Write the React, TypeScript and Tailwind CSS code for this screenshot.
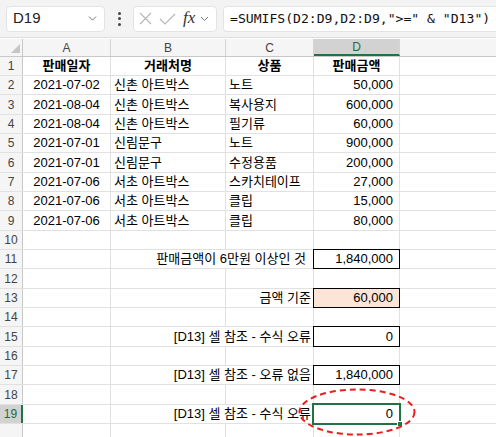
import { ChevronDown } from 'lucide-react'

type Row = {
  a?: string
  b?: string
  c?: string
  d?: string
  label?: string
  span?: boolean
  box?: boolean
  fill?: boolean
  selected?: boolean
  bold?: boolean
  labelPad?: string
}

const rows: Row[] = [
  { a: '판매일자', b: '거래처명', c: '상품', d: '판매금액', bold: true },
  { a: '2021-07-02', b: '신촌 아트박스', c: '노트', d: '50,000' },
  { a: '2021-08-04', b: '신촌 아트박스', c: '복사용지', d: '600,000' },
  { a: '2021-08-04', b: '신촌 아트박스', c: '필기류', d: '60,000' },
  { a: '2021-07-01', b: '신림문구', c: '노트', d: '900,000' },
  { a: '2021-07-01', b: '신림문구', c: '수정용품', d: '200,000' },
  { a: '2021-07-06', b: '서초 아트박스', c: '스카치테이프', d: '27,000' },
  { a: '2021-07-06', b: '서초 아트박스', c: '클립', d: '15,000' },
  { a: '2021-07-06', b: '서초 아트박스', c: '클립', d: '80,000' },
  {},
  { label: '판매금액이 6만원 이상인 것', span: true, d: '1,840,000', box: true, labelPad: 'pr-[7px]' },
  {},
  { label: '금액 기준', d: '60,000', box: true, fill: true },
  {},
  { label: '[D13] 셀 참조 - 수식 오류', span: true, d: '0', box: true },
  {},
  { label: '[D13] 셀 참조 - 오류 없음', span: true, d: '1,840,000', box: true },
  {},
  { label: '[D13] 셀 참조 - 수식 오류', span: true, d: '0', selected: true },
]

const heights = [19, 19, 20, 19, 19, 20, 19, 19, 20, 19, 19, 20, 19, 19, 20, 19, 19, 20, 19]

const grid = 'border-r border-[#e1e1e1]'

function SheetRow({ row, n, h }: { row: Row; n: number; h: number }) {
  const sel = row.selected
  return (
    <div className={`flex ${h === 20 ? 'h-[20px]' : 'h-[19px]'} border-b border-[#e1e1e1]`}>
      <div
        className={`w-[23px] shrink-0 flex items-center justify-center text-[12px] ${
          sel
            ? 'bg-[#d2d2d2] text-[#1e6b40] border-r-2 border-[#217346]'
            : 'bg-[#f5f5f5] text-[#444] border-r border-[#c8c8c8]'
        }`}
      >
        {n}
      </div>
      <div className={`w-[88px] shrink-0 ${grid} flex items-center justify-center ${row.bold ? 'font-bold' : ''}`}>
        {row.a}
      </div>
      {row.span ? (
        <div className={`w-[203px] shrink-0 ${grid} flex items-center justify-end ${row.labelPad ?? 'pr-[2px]'} whitespace-nowrap`}>
          {row.label}
        </div>
      ) : (
        <>
          <div className={`w-[115px] shrink-0 ${grid} flex items-center ${row.bold ? 'justify-center font-bold' : 'pl-[3px]'} whitespace-nowrap`}>
            {row.b}
          </div>
          <div
            className={`w-[88px] shrink-0 ${grid} flex items-center whitespace-nowrap ${
              row.bold ? 'justify-center font-bold' : row.label ? 'justify-end pr-[2px]' : 'pl-[3px]'
            }`}
          >
            {row.c ?? row.label}
          </div>
        </>
      )}
      <div
        className={`relative w-[86px] shrink-0 ${grid} flex items-center ${
          row.bold ? 'justify-center font-bold' : 'justify-end pr-[6px]'
        } ${row.fill ? 'bg-[#fce4d6]' : ''}`}
      >
        {row.d}
        {row.box && <div className="absolute -top-px -left-px -right-px -bottom-px border border-black" />}
        {sel && (
          <>
            <div className="absolute -top-[2px] -left-[2px] -right-[2px] -bottom-[2px] border-[2px] border-[#217346]" />
            <div className="absolute -right-[4px] -bottom-[4px] w-[6px] h-[6px] bg-[#217346] border border-white" />
          </>
        )}
      </div>
      <div className="flex-1" />
    </div>
  )
}

export default function App() {
  return (
    <div
      className="relative w-[496px] h-[437px] overflow-hidden bg-white text-[13px] text-black"
      style={{ fontFamily: '"Liberation Sans", "Noto Sans CJK KR", sans-serif' }}
    >
      {/* Formula bar */}
      <div className="h-[38px] bg-[#f3f3f3] flex items-center pl-[6px] gap-[6px] border-b border-[#dcdcdc]">
        <div className="w-[99px] h-[26px] bg-white rounded-[4px] border border-[#e3e3e3] flex items-center justify-between pl-[6px] pr-[5px]">
          <span className="text-[15px] text-[#222]">D19</span>
          <ChevronDown className="w-[13px] h-[13px] text-[#555]" strokeWidth={1.5} />
        </div>
        <div className="w-[16px] flex flex-col items-center gap-[2.5px]">
          <span className="w-[3px] h-[3px] rounded-full bg-[#444]" />
          <span className="w-[3px] h-[3px] rounded-full bg-[#444]" />
          <span className="w-[3px] h-[3px] rounded-full bg-[#444]" />
        </div>
        <div className="w-[84px] h-[26px] bg-white rounded-[4px] border border-[#e3e3e3] flex items-center pl-[5px] gap-[7px]">
          <svg width="13" height="13" viewBox="0 0 13 13" className="shrink-0">
            <path d="M1 1 L12 12 M12 1 L1 12" stroke="#b5b5b5" strokeWidth="1.1" fill="none" />
          </svg>
          <svg width="17" height="12" viewBox="0 0 17 12" className="shrink-0">
            <path d="M1 6 L6 11 L16 1" stroke="#b5b5b5" strokeWidth="1.1" fill="none" />
          </svg>
          <span
            className="italic text-[17px] text-[#333] leading-none -mt-[2px]"
            style={{ fontFamily: '"Liberation Serif", serif' }}
          >
            fx
          </span>
          <svg width="9" height="6" viewBox="0 0 9 6" className="shrink-0 -ml-[2px]">
            <path d="M1 1 L4.5 4.5 L8 1" stroke="#777" strokeWidth="1" fill="none" />
          </svg>
        </div>
        <div className="flex-1 h-[26px] bg-white rounded-l-[4px] border border-r-0 border-[#e3e3e3] flex items-center pl-[6px] whitespace-nowrap overflow-hidden">
          <span className="text-[13.1px] text-[#111]" style={{ fontFamily: '"DejaVu Sans Mono", monospace' }}>
            =SUMIFS(D2:D9,D2:D9,"&gt;=" &amp; "D13")
          </span>
        </div>
      </div>

      {/* Column headers */}
      <div className="flex h-[18px] bg-[#f5f5f5] border-b border-[#c8c8c8] text-[12px] text-[#444] mt-px">
        <div className="w-[23px] shrink-0 border-r border-[#c8c8c8] flex items-end justify-end pr-[2px] pb-[3px]">
          <svg width="9" height="9" viewBox="0 0 9 9">
            <path d="M9 0 L9 9 L0 9 Z" fill="#c6c6c6" />
          </svg>
        </div>
        <div className="w-[88px] shrink-0 border-r border-[#d4d4d4] flex items-center justify-center">A</div>
        <div className="w-[115px] shrink-0 border-r border-[#d4d4d4] flex items-center justify-center">B</div>
        <div className="w-[88px] shrink-0 border-r border-[#d4d4d4] flex items-center justify-center">C</div>
        <div className="w-[86px] shrink-0 border-r border-[#d4d4d4] flex items-center justify-center bg-[#d2d2d2] text-[#1e6b40] border-b-2 border-b-[#217346]">
          D
        </div>
        <div className="flex-1" />
      </div>

      {rows.map((r, i) => (
        <SheetRow key={i} row={r} n={i + 1} h={heights[i]} />
      ))}
      <div className="flex h-[20px]">
        <div className="w-[23px] shrink-0 bg-[#f5f5f5] border-r border-[#c8c8c8]" />
        <div className={`w-[88px] shrink-0 ${grid}`} />
        <div className={`w-[115px] shrink-0 ${grid}`} />
        <div className={`w-[88px] shrink-0 ${grid}`} />
        <div className={`w-[86px] shrink-0 ${grid}`} />
      </div>

      {/* Callout ellipse */}
      <svg className="absolute left-[298px] top-[388px]" width="120" height="49" viewBox="0 0 120 49">
        <ellipse cx="59" cy="24" rx="57.5" ry="22.5" fill="none" stroke="#ee1c1c" strokeWidth="2" strokeDasharray="6 4" />
      </svg>
    </div>
  )
}
